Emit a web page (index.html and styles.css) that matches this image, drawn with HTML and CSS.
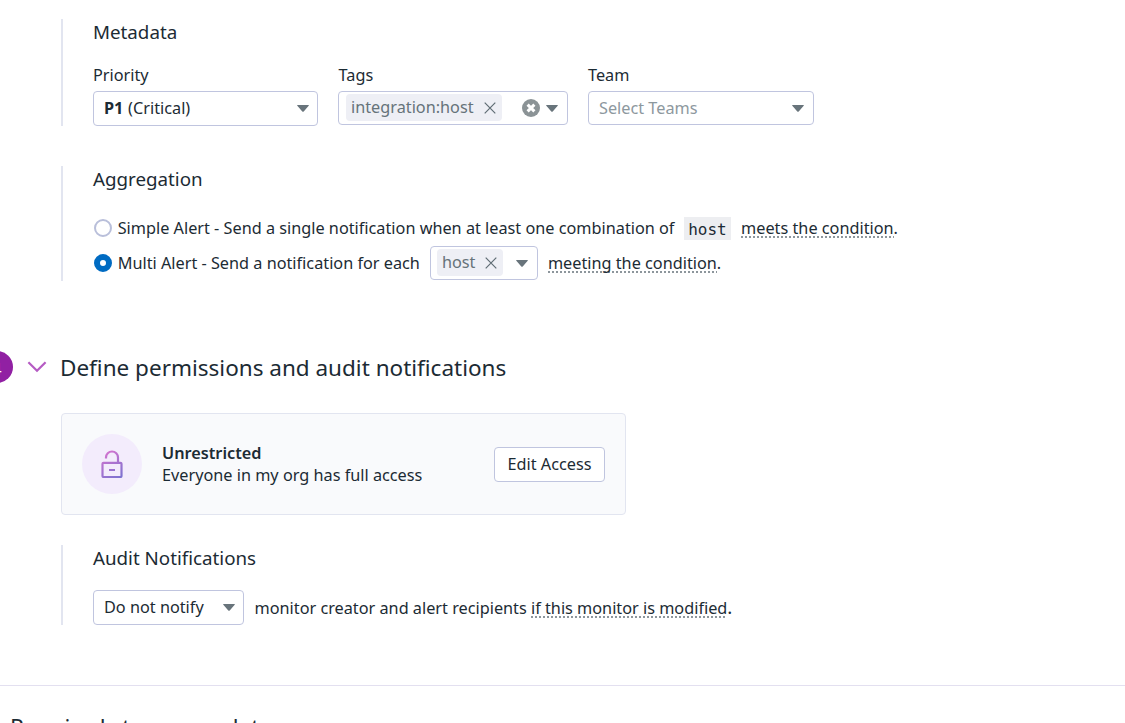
FILE: index.html
```
<!DOCTYPE html>
<html lang="en">
<head>
<meta charset="utf-8">
<title>Monitor settings</title>
<link rel="stylesheet" href="styles.css">
</head>
<body>
<main class="page">
  <section class="group metadata">
    <h3 class="group-title">Metadata</h3>
    <div class="fields">
      <div class="field priority">
        <label class="label">Priority</label>
        <div class="select tall"><span class="value"><b>P1</b> (Critical)</span><svg class="caret" viewBox="0 0 12 7"><path d="M.6 0h10.8q.8 0 .3.7L6.7 6.4q-.7.8-1.4 0L.3.7Q-.2 0 .6 0z"/></svg></div>
      </div>
      <div class="field tags">
        <label class="label">Tags</label>
        <div class="select tagbox">
          <span class="chip">integration:host<svg class="cross" viewBox="0 0 12 12"><path d="M.7.7l10.6 10.6M11.3.7L.7 11.3"/></svg></span>
          <svg class="clear" viewBox="0 0 18 18"><circle cx="9" cy="9" r="9"/><path d="M5.6 5.6l6.8 6.8M12.4 5.6l-6.8 6.8"/></svg>
          <svg class="caret" viewBox="0 0 12 7"><path d="M.6 0h10.8q.8 0 .3.7L6.7 6.4q-.7.8-1.4 0L.3.7Q-.2 0 .6 0z"/></svg>
        </div>
      </div>
      <div class="field team">
        <label class="label">Team</label>
        <div class="select"><span class="value placeholder">Select Teams</span><svg class="caret" viewBox="0 0 12 7"><path d="M.6 0h10.8q.8 0 .3.7L6.7 6.4q-.7.8-1.4 0L.3.7Q-.2 0 .6 0z"/></svg></div>
      </div>
    </div>
  </section>

  <section class="group aggregation">
    <h3 class="group-title">Aggregation</h3>
    <div class="option simple">
      <span class="radio"></span>
      <span class="option-text">Simple Alert - Send a single notification when at least one combination of</span>
      <code class="code">host</code>
      <span><span class="hint">meets the condition</span>.</span>
    </div>
    <div class="option multi">
      <span class="radio checked"></span>
      <span class="option-text">Multi Alert - Send a notification for each</span>
      <div class="select tagbox host">
        <span class="chip">host<svg class="cross" viewBox="0 0 12 12"><path d="M.7.7l10.6 10.6M11.3.7L.7 11.3"/></svg></span>
        <svg class="caret" viewBox="0 0 12 7"><path d="M.6 0h10.8q.8 0 .3.7L6.7 6.4q-.7.8-1.4 0L.3.7Q-.2 0 .6 0z"/></svg>
      </div>
      <span><span class="hint">meeting the condition</span>.</span>
    </div>
  </section>

  <header class="step">
    <span class="step-number">4</span>
    <svg class="chevron" viewBox="0 0 20 12"><path d="M1.4 1.2L10 9.8l8.6-8.6"/></svg>
    <h2 class="step-title">Define permissions and audit notifications</h2>
  </header>

  <section class="access">
    <span class="access-icon">
      <svg class="lock" viewBox="0 0 22 28">
        <defs><linearGradient id="lock-stroke" gradientUnits="userSpaceOnUse" x1="4" y1="0" x2="20" y2="28"><stop offset="0" stop-color="#d873cf"/><stop offset="1" stop-color="#7b73d0"/></linearGradient></defs>
        <g fill="none" stroke="url(#lock-stroke)" stroke-width="2.2">
          <rect x="1.5" y="12.8" width="19" height="14.2" rx="1"/>
          <path d="M5 8.6V7.5a6 6 0 0 1 12 0v5.3M8 20h6"/>
        </g>
      </svg>
    </span>
    <div class="access-text"><strong>Unrestricted</strong><span>Everyone in my org has full access</span></div>
    <button class="button">Edit Access</button>
  </section>

  <section class="group audit">
    <h3 class="group-title">Audit Notifications</h3>
    <div class="audit-row">
      <div class="select tall notify"><span class="value">Do not notify</span><svg class="caret" viewBox="0 0 12 7"><path d="M.6 0h10.8q.8 0 .3.7L6.7 6.4q-.7.8-1.4 0L.3.7Q-.2 0 .6 0z"/></svg></div>
      <span class="audit-text">monitor creator and alert recipients <span class="hint">if this monitor is modified</span><span class="stop">.</span></span>
    </div>
  </section>

  <footer class="footer">Required steps complete</footer>
</main>
</body>
</html>
```
FILE: styles.css
```
* { box-sizing: border-box; }
body { margin: 0; background: #fff; overflow: hidden; }
.page {
  height: 723px;
  padding-top: 19px;
  overflow: hidden;
  font: 16.25px/22px "Noto Sans", sans-serif;
  color: #1c2b34;
  white-space: nowrap;
}
svg { display: block; flex: none; }

.group { margin-left: 61px; padding-left: 30px; border-left: 2px solid #e2e5f0; }
.group-title { margin: 0; font-size: 18.75px; line-height: 26px; font-weight: 400; }
.metadata { height: 107px; }
.fields { display: flex; gap: 20px; margin-top: 19px; }
.label { display: block; height: 27px; line-height: 23px; }
.priority { width: 225px; }
.tags { width: 230px; }
.tags .label { padding-left: .6px; }
.team { width: 226px; }

.select {
  display: flex;
  align-items: center;
  justify-content: space-between;
  height: 34px;
  padding: 0 9px 0 10px;
  border: 1px solid #c0c5df;
  border-radius: 4px;
  background: #fff;
}
.tall { height: 35px; padding-right: 8px; }
.tall .value { padding-bottom: 1px; }
.value b { font-weight: 700; padding-right: .5px; }
.placeholder { color: #8d989e; }
.caret { width: 12px; height: 7px; fill: #68747b; }
.tagbox { padding-left: 7px; }
.chip {
  display: flex;
  align-items: center;
  gap: 10px;
  height: 27px;
  margin-bottom: 1px;
  padding: 0 6px 1px 5px;
  border-radius: 4px;
  background: #eeeff5;
  color: #66737a;
}
.cross { width: 12px; height: 12px; fill: none; stroke: #5f6c74; stroke-width: 1.2; margin-top: 2px; }
.clear { width: 18px; height: 18px; margin: 0 6px 0 auto; fill: #8b9396; }
.clear path { stroke: #fff; stroke-width: 3; }

.aggregation { height: 115px; margin-top: 40px; }
.option { display: flex; align-items: center; }
.simple { height: 24px; margin-top: 24px; }
.multi { height: 34px; margin-top: 6px; }
.radio { width: 18px; height: 18px; margin: 0 5.7px 0 1px; border: 2px solid #b9bfda; border-radius: 50%; }
.checked { border: 6px solid #006bc2; }
.code {
  height: 23px;
  margin: 0 10px 0 9.3px;
  padding: 2px 4.4px 0;
  background: #edeef1;
  font: 16px/22px "DejaVu Sans Mono", monospace;
}
.host { width: 108px; margin: 0 10px; padding-left: 6px; }
.hint { background: repeating-linear-gradient(90deg, #8d969c 0 2px, transparent 2px 4px) 0 calc(100% - 1px) / 100% 2px no-repeat; }

.step { display: flex; align-items: center; height: 34px; margin: 69px 0 0 -19px; }
.step-number { width: 32px; height: 32px; border-radius: 50%; background: #9120a3; color: #fff; text-align: center; line-height: 36px; }
.chevron { width: 20px; height: 12px; margin-left: 14px; fill: none; stroke: #b55bc3; stroke-width: 2.2; }
.step-title { margin: 2px 0 0 13px; font-size: 22.5px; line-height: 34px; font-weight: 400; }

.access {
  display: flex;
  align-items: center;
  width: 565px;
  height: 102px;
  margin: 29px 0 0 61px;
  padding: 0 20px;
  border: 1px solid #e2e5f0;
  border-radius: 4px;
  background: #f9fafc;
}
.access-icon { display: flex; align-items: center; justify-content: center; width: 60px; height: 60px; border-radius: 50%; background: #f3ecfc; }
.lock { width: 22px; height: 28px; }
.access-text { display: flex; flex-direction: column; margin-left: 20px; }
.access-text strong { font-weight: 600; }
.button {
  width: 111px;
  height: 35px;
  margin-left: auto;
  padding: 0;
  border: 1px solid #c0c5df;
  border-radius: 4px;
  background: #fff;
  color: inherit;
  font: inherit;
}

.audit { height: 80px; margin-top: 30px; }
.audit-row { display: flex; align-items: center; gap: 10.5px; margin-top: 19px; }
.notify { width: 151px; }
.stop { font-size: 18.75px; }

.footer { height: 80px; margin-top: 60px; padding: 24px 0 0 10px; border-top: 1px solid #e3e0f0; font-size: 22.5px; line-height: 34px; }
```
